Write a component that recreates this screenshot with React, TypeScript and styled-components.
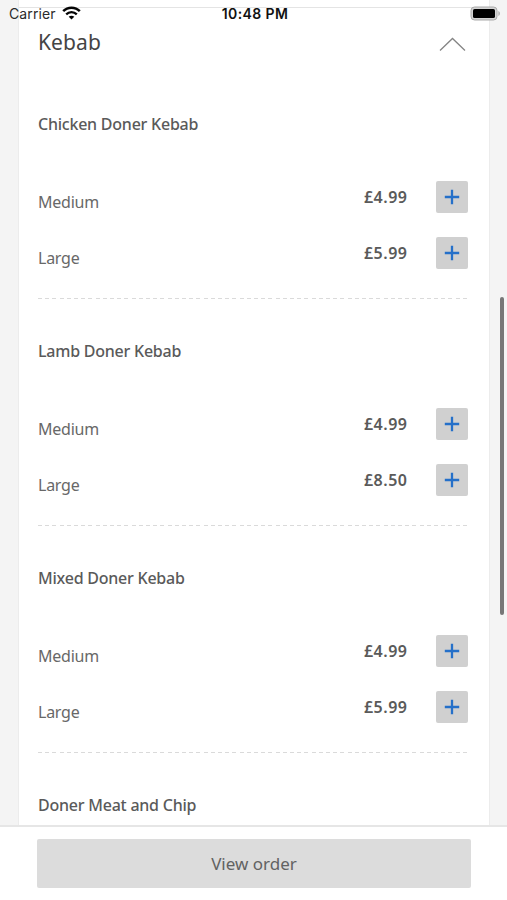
import React from "react";
import styled, { createGlobalStyle } from "styled-components";

const GlobalStyle = createGlobalStyle`
  * { box-sizing: border-box; }
  body { margin: 0; background: #fff; }
`;

const Screen = styled.div`
  position: relative;
  display: flex;
  flex-direction: column;
  width: 507px;
  height: 900px;
  overflow: hidden;
  background: #f4f4f4;
  color: #5a5a5a;
  font-family: "Noto Sans", sans-serif;
`;

const StatusBar = styled.header`
  position: absolute;
  inset: 0 0 auto 0;
  z-index: 2;
  display: grid;
  grid-template-columns: 1fr auto 1fr;
  align-items: center;
  height: 28px;
  padding: 0 6px 0 9px;
  color: #111;
  font-family: Inter, sans-serif;
  font-size: 14px;
  line-height: 28px;
`;

const Carrier = styled.div`
  display: flex;
  align-items: center;
  gap: 6px;
  letter-spacing: 0.1px;
  color: #2b2b2b;
`;

const Clock = styled.time`
  font-weight: 600;
  letter-spacing: 0.4px;
`;

const Battery = styled.svg`
  justify-self: end;
  display: block;
  margin-top: -1px;
`;

const Wifi = styled.svg`
  display: block;
  margin-top: -3px;
`;

const Viewport = styled.main`
  flex: 1;
  min-height: 0;
  overflow: hidden;
  padding: 0 17px 0 18px;
`;

const Card = styled.section`
  height: 100%;
  padding: 7px 19px 0;
  background: #fff;
  border: solid #ececec;
  border-width: 0 1px;
`;

const CategoryHeader = styled.div`
  display: flex;
  justify-content: space-between;
  height: 64px;
  margin: 0 -19px;
  padding: 0 23px 0 19px;
  border-top: 1px solid #e4e4e4;
`;

const CategoryTitle = styled.h2`
  margin: 19px 0 0;
  color: #444;
  font-size: 21px;
  font-weight: 400;
  line-height: 30px;
  letter-spacing: 0.1px;
`;

const Chevron = styled.svg`
  display: block;
  margin-top: 28px;
`;

const Item = styled.article`
  height: 227px;
  padding-top: 41px;
`;

const ItemName = styled.h3`
  margin: 0;
  font-size: 16px;
  font-weight: 500;
  line-height: 24px;
  letter-spacing: -0.23px;
  white-space: nowrap;
`;

const Options = styled.div`
  display: grid;
  gap: 24px;
  margin-top: 44px;
`;

const Option = styled.div`
  display: grid;
  grid-template-columns: 1fr auto 32px;
  column-gap: 28px;
  align-items: center;
  height: 32px;
  padding-right: 2.5px;
`;

const Size = styled.span`
  padding-top: 10px;
  color: #686868;
  font-size: 16px;
  font-weight: 450;
  line-height: 24px;
  letter-spacing: -0.25px;
`;

const Price = styled.span`
  font-size: 16px;
  font-weight: 600;
  line-height: 24px;
  letter-spacing: 0.5px;
`;

const AddButton = styled.button`
  display: grid;
  place-items: center;
  width: 32px;
  height: 32px;
  padding: 0;
  border: 0;
  border-radius: 2px;
  background: #d0d0d0;
  color: #2570c9;
`;

const Divider = styled.div`
  height: 1px;
  margin-top: 30px;
  background: repeating-linear-gradient(90deg, #dadada 0 4px, transparent 4px 7.2px);
`;

const ScrollThumb = styled.div`
  position: absolute;
  top: 297px;
  right: 3px;
  width: 4px;
  height: 318px;
  border-radius: 2px;
  background: #777;
`;

const Footer = styled.footer`
  flex: none;
  height: 75px;
  padding: 12px 36px 12px 37px;
  border-top: 2px solid #e6e6e6;
  background: #fff;
`;

const ViewOrder = styled.button`
  width: 100%;
  height: 49px;
  padding: 0;
  border: 0;
  border-radius: 2px;
  background: #dcdcdc;
  color: #626262;
  font-family: "Noto Sans", sans-serif;
  font-size: 17px;
  line-height: 49px;
`;

const menu = [
  { name: "Chicken Doner Kebab", options: [["Medium", "£4.99"], ["Large", "£5.99"]] },
  { name: "Lamb Doner Kebab", options: [["Medium", "£4.99"], ["Large", "£8.50"]] },
  { name: "Mixed Doner Kebab", options: [["Medium", "£4.99"], ["Large", "£5.99"]] },
  { name: "Doner Meat and Chip", options: [] },
];

export default function App() {
  return (
    <Screen>
      <GlobalStyle />
      <StatusBar>
        <Carrier>
          Carrier
          <Wifi width="19" height="14" viewBox="0 0 19 14" fill="none" stroke="#050505">
            <path d="M1.2 5.2C5.8.5 13.2.5 17.8 5.2" strokeWidth="2.5" />
            <path d="M4.2 8.3c3-2.9 7.6-2.9 10.6 0" strokeWidth="2.3" />
            <path d="M9.5 13.6 6.7 10.8c1.6-1.4 4-1.4 5.6 0z" fill="#050505" stroke="none" />
          </Wifi>
        </Carrier>
        <Clock>10:48 PM</Clock>
        <Battery width="31" height="15" viewBox="0 0 31 15">
          <rect x="1" y="1" width="26" height="13" rx="3.5" fill="#d4d4d4" stroke="#aaa" />
          <rect x="3" y="3" width="22" height="9" rx="1.6" fill="#000" />
          <path d="M28.4 5v5c2-.9 2-4.1 0-5z" fill="#aaa" />
        </Battery>
      </StatusBar>

      <Viewport>
        <Card>
          <CategoryHeader>
            <CategoryTitle>Kebab</CategoryTitle>
            <Chevron width="27" height="16" viewBox="0 0 27 16" fill="none">
              <path d="M1 14.5 13.5 2.5 26 14.5" stroke="#858585" strokeWidth="1.3" />
            </Chevron>
          </CategoryHeader>
          {menu.map((item) => (
            <Item key={item.name}>
              <ItemName>{item.name}</ItemName>
              {item.options.length > 0 && (
                <>
                  <Options>
                    {item.options.map(([size, price]) => (
                      <Option key={size}>
                        <Size>{size}</Size>
                        <Price>{price}</Price>
                        <AddButton aria-label={`Add ${size}`}>
                          <svg width="16" height="16" viewBox="0 0 16 16">
                            <path d="M8 .8v14.4M.8 8h14.4" stroke="currentColor" strokeWidth="2.3" />
                          </svg>
                        </AddButton>
                      </Option>
                    ))}
                  </Options>
                  <Divider />
                </>
              )}
            </Item>
          ))}
        </Card>
      </Viewport>

      <ScrollThumb />
      <Footer>
        <ViewOrder>View order</ViewOrder>
      </Footer>
    </Screen>
  );
}
